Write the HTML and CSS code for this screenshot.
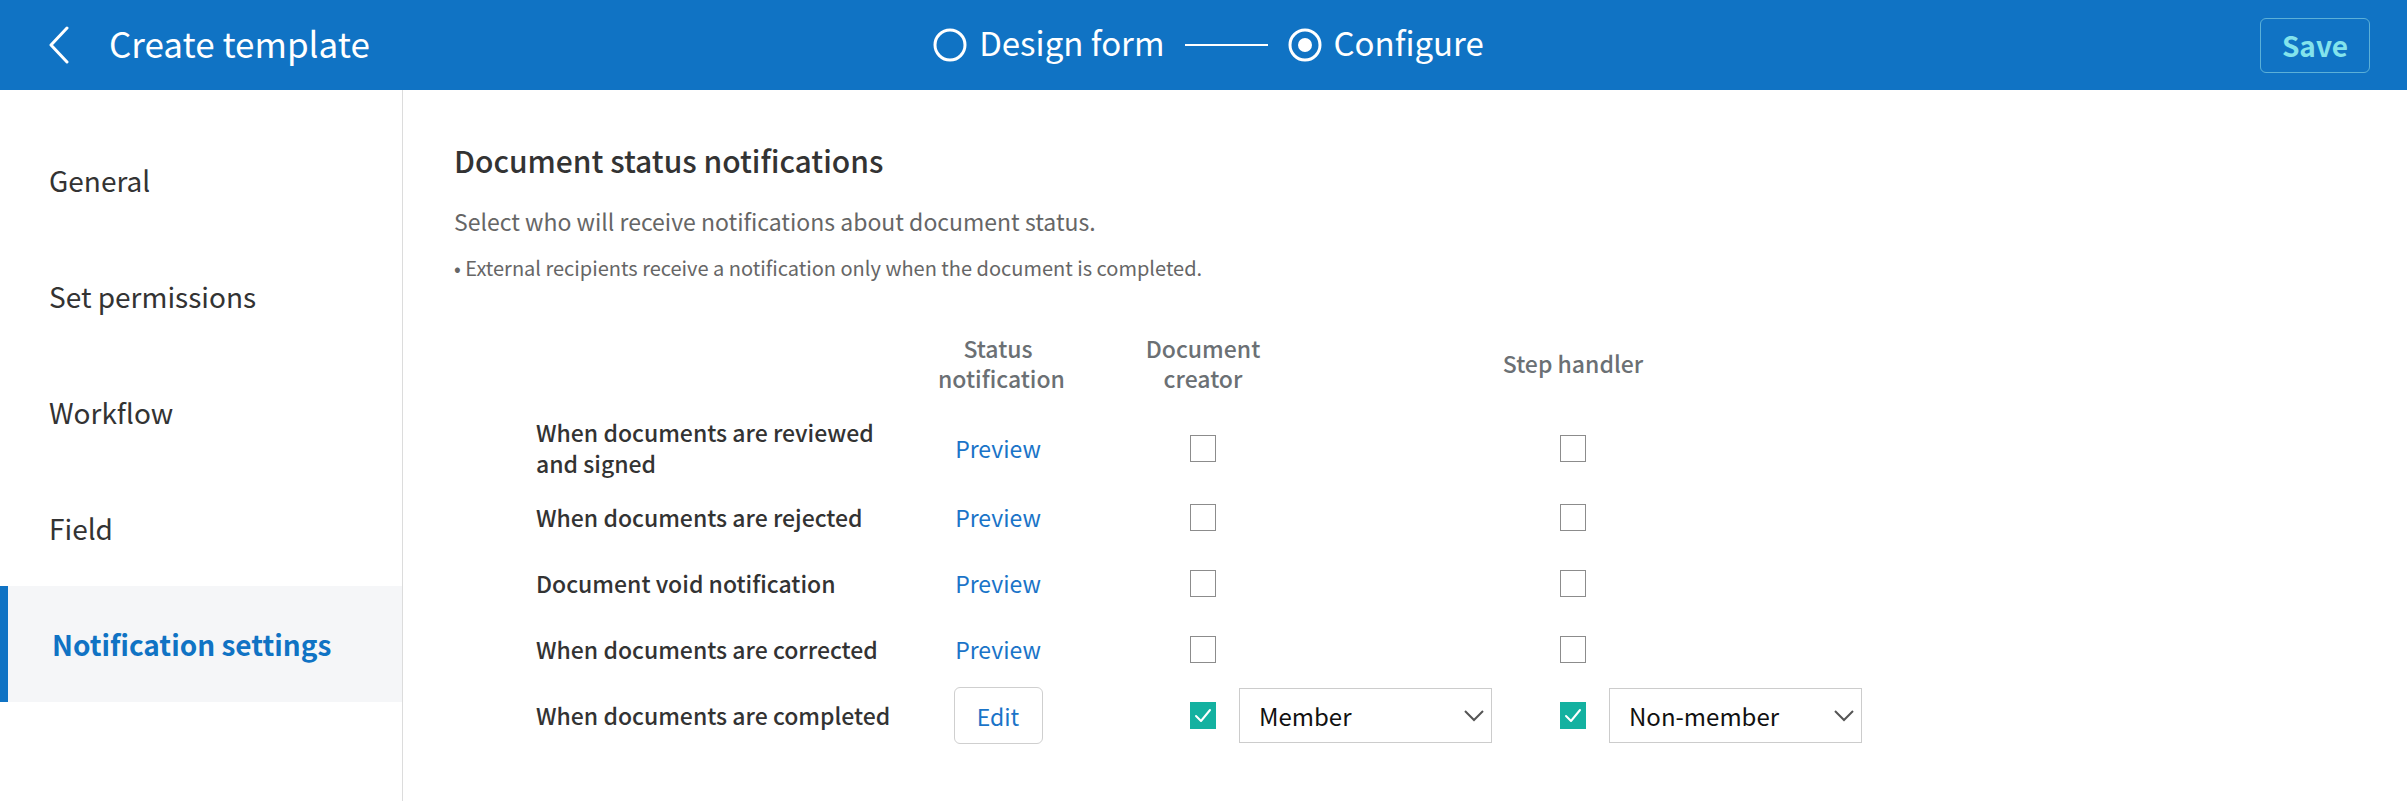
FILE: index.html
```html
<!DOCTYPE html>
<html lang="en">
<head>
<meta charset="utf-8">
<title>Create template</title>
<link rel="stylesheet" href="styles.css">
</head>
<body>
<header class="topbar">
  <div class="topbar-left">
    <svg class="back" width="22" height="38" viewBox="0 0 22 38"><polyline points="19,2 3,19 19,36" fill="none" stroke="#fff" stroke-width="3" stroke-linecap="round" stroke-linejoin="round"/></svg>
    <h1 class="title">Create template</h1>
  </div>
  <div class="steps">
    <div class="step">
      <svg width="34" height="34" viewBox="0 0 34 34"><circle cx="17" cy="17" r="15" fill="none" stroke="#fff" stroke-width="3"/></svg>
      <span>Design form</span>
    </div>
    <div class="step-line"></div>
    <div class="step">
      <svg width="34" height="34" viewBox="0 0 34 34"><circle cx="17" cy="17" r="15" fill="none" stroke="#fff" stroke-width="3"/><circle cx="17" cy="17" r="7" fill="#fff"/></svg>
      <span>Configure</span>
    </div>
  </div>
  <div class="topbar-right">
    <button class="save">Save</button>
  </div>
</header>
<div class="layout">
  <nav class="sidebar">
    <div class="nav-item">General</div>
    <div class="nav-item">Set permissions</div>
    <div class="nav-item">Workflow</div>
    <div class="nav-item">Field</div>
    <div class="nav-item active">Notification settings</div>
  </nav>
  <main class="content">
    <h2 class="heading">Document status notifications</h2>
    <p class="desc">Select who will receive notifications about document status.</p>
    <p class="note">• External recipients receive a notification only when the document is completed.</p>
    <div class="grid">
      <div class="row head">
        <div></div>
        <div class="c-status">Status<br>notification</div>
        <div class="c-creator"><div class="hanchor"><span>Document<br>creator</span></div></div>
        <div class="c-handler"><div class="hanchor"><span>Step handler</span></div></div>
      </div>
      <div class="row">
        <div class="label">When documents are reviewed<br>and signed</div>
        <div class="c-status"><a class="link">Preview</a></div>
        <div class="c-creator"><span class="cb"></span></div>
        <div class="c-handler"><span class="cb"></span></div>
      </div>
      <div class="row">
        <div class="label">When documents are rejected</div>
        <div class="c-status"><a class="link">Preview</a></div>
        <div class="c-creator"><span class="cb"></span></div>
        <div class="c-handler"><span class="cb"></span></div>
      </div>
      <div class="row">
        <div class="label">Document void notification</div>
        <div class="c-status"><a class="link">Preview</a></div>
        <div class="c-creator"><span class="cb"></span></div>
        <div class="c-handler"><span class="cb"></span></div>
      </div>
      <div class="row">
        <div class="label">When documents are corrected</div>
        <div class="c-status"><a class="link">Preview</a></div>
        <div class="c-creator"><span class="cb"></span></div>
        <div class="c-handler"><span class="cb"></span></div>
      </div>
      <div class="row">
        <div class="label">When documents are completed</div>
        <div class="c-status"><button class="edit">Edit</button></div>
        <div class="c-creator">
          <span class="cb checked"><svg width="26" height="27" viewBox="0 0 26 27"><polyline points="6,14 11,19 20,8" fill="none" stroke="#fff" stroke-width="2" stroke-linecap="round" stroke-linejoin="round"/></svg></span>
          <div class="select"><span>Member</span><svg width="22" height="13" viewBox="0 0 22 13"><polyline points="2,2 11,11 20,2" fill="none" stroke="#555" stroke-width="2"/></svg></div>
        </div>
        <div class="c-handler">
          <span class="cb checked"><svg width="26" height="27" viewBox="0 0 26 27"><polyline points="6,14 11,19 20,8" fill="none" stroke="#fff" stroke-width="2" stroke-linecap="round" stroke-linejoin="round"/></svg></span>
          <div class="select"><span>Non-member</span><svg width="22" height="13" viewBox="0 0 22 13"><polyline points="2,2 11,11 20,2" fill="none" stroke="#555" stroke-width="2"/></svg></div>
        </div>
      </div>
    </div>
  </main>
</div>
</body>
</html>
```
FILE: styles.css
```css
* { box-sizing: border-box; }
html, body { margin: 0; padding: 0; }
body {
  font-family: "Noto Sans CJK KR", "Noto Sans", sans-serif;
  color: #333;
  background: #fff;
  height: 801px;
  overflow: hidden;
}
.topbar {
  height: 90px;
  background: #1073c4;
  display: grid;
  grid-template-columns: 1fr auto 1fr;
  align-items: center;
  color: #fff;
}
.topbar-left {
  display: flex;
  align-items: center;
  padding-left: 48px;
  gap: 39px;
}
.back { display: block; }
.title {
  margin: 0 0 5px;
  font-size: 35px;
  font-weight: 400;
  line-height: 1;
}
.steps {
  display: flex;
  align-items: center;
  margin-left: 10px;
}
.step {
  display: flex;
  align-items: center;
  gap: 12px;
  font-size: 33px;
  line-height: 1;
}
.step span { margin-bottom: 5px; }
.step svg { display: block; }
.step-line {
  width: 83px;
  height: 2px;
  background: #fff;
  margin: 0 20px;
}
.topbar-right {
  display: flex;
  justify-content: flex-end;
  padding-right: 37px;
}
.save {
  width: 110px;
  height: 55px;
  border: 1.5px solid #5bb0d8;
  border-radius: 6px;
  background: transparent;
  color: #83e3ec;
  font-family: inherit;
  font-weight: 700;
  font-size: 28px;
}
.layout {
  display: flex;
  height: 711px;
}
.sidebar {
  width: 403px;
  flex: none;
  border-right: 1px solid #dcdcdc;
  padding-top: 32px;
}
.nav-item {
  height: 116px;
  display: flex;
  align-items: center;
  padding-left: 49px;
  font-size: 28px;
  color: #333;
}
.nav-item.active {
  background: #f5f6f8;
  border-left: 8px solid #1073c4;
  padding-left: 44px;
  color: #1073c4;
  font-weight: 700;
}
.content {
  padding: 0 0 0 51px;
  flex: 1;
}
.heading {
  margin: 55px 0 0;
  font-size: 30px;
  font-weight: 500;
  line-height: 30px;
  color: #333;
}
.desc {
  margin: 31px 0 0;
  font-size: 23px;
  line-height: 30px;
  color: #666;
}
.note {
  margin: 20px 0 0;
  font-size: 20px;
  line-height: 24px;
  color: #666;
}
.grid {
  margin-top: 53px;
  margin-left: 82px;
}
.row {
  display: grid;
  grid-template-columns: 402px 120px 434px 370px;
  align-items: center;
  min-height: 66px;
  padding: 5px 0;
}
.row.head {
  padding: 0 0 19px;
  font-size: 23px;
  line-height: 30px;
  font-weight: 500;
  color: #6b7074;
}
.label {
  font-size: 23px;
  line-height: 31px;
  font-weight: 500;
  color: #333;
}
.c-status {
  text-align: center;
  display: flex;
  justify-content: center;
}
.row.head .c-status { display: block; }
.c-creator { padding-left: 132px; display: flex; align-items: center; }
.c-handler { padding-left: 68px; display: flex; align-items: center; }
.hanchor {
  width: 26px;
  display: flex;
  justify-content: center;
  text-align: center;
  white-space: nowrap;
}
.link {
  color: #1a74c8;
  font-size: 23px;
  line-height: 31px;
}
.cb {
  width: 26px;
  height: 27px;
  border: 1.5px solid #8c8c8c;
  display: block;
  flex: none;
  background: #fff;
}
.cb.checked {
  border: none;
  background: #13b1a0;
}
.cb svg { display: block; }
.edit {
  width: 89px;
  height: 57px;
  background: #fff;
  border: 1px solid #cfcfcf;
  border-radius: 6px;
  color: #1a74c8;
  font-family: inherit;
  font-size: 23px;
}
.select {
  margin-left: 23px;
  width: 253px;
  height: 55px;
  border: 1.5px solid #cccccc;
  display: flex;
  align-items: center;
  justify-content: space-between;
  padding: 0 6px 0 19px;
  font-size: 24px;
  color: #111;
}
.select svg { display: block; }
```
